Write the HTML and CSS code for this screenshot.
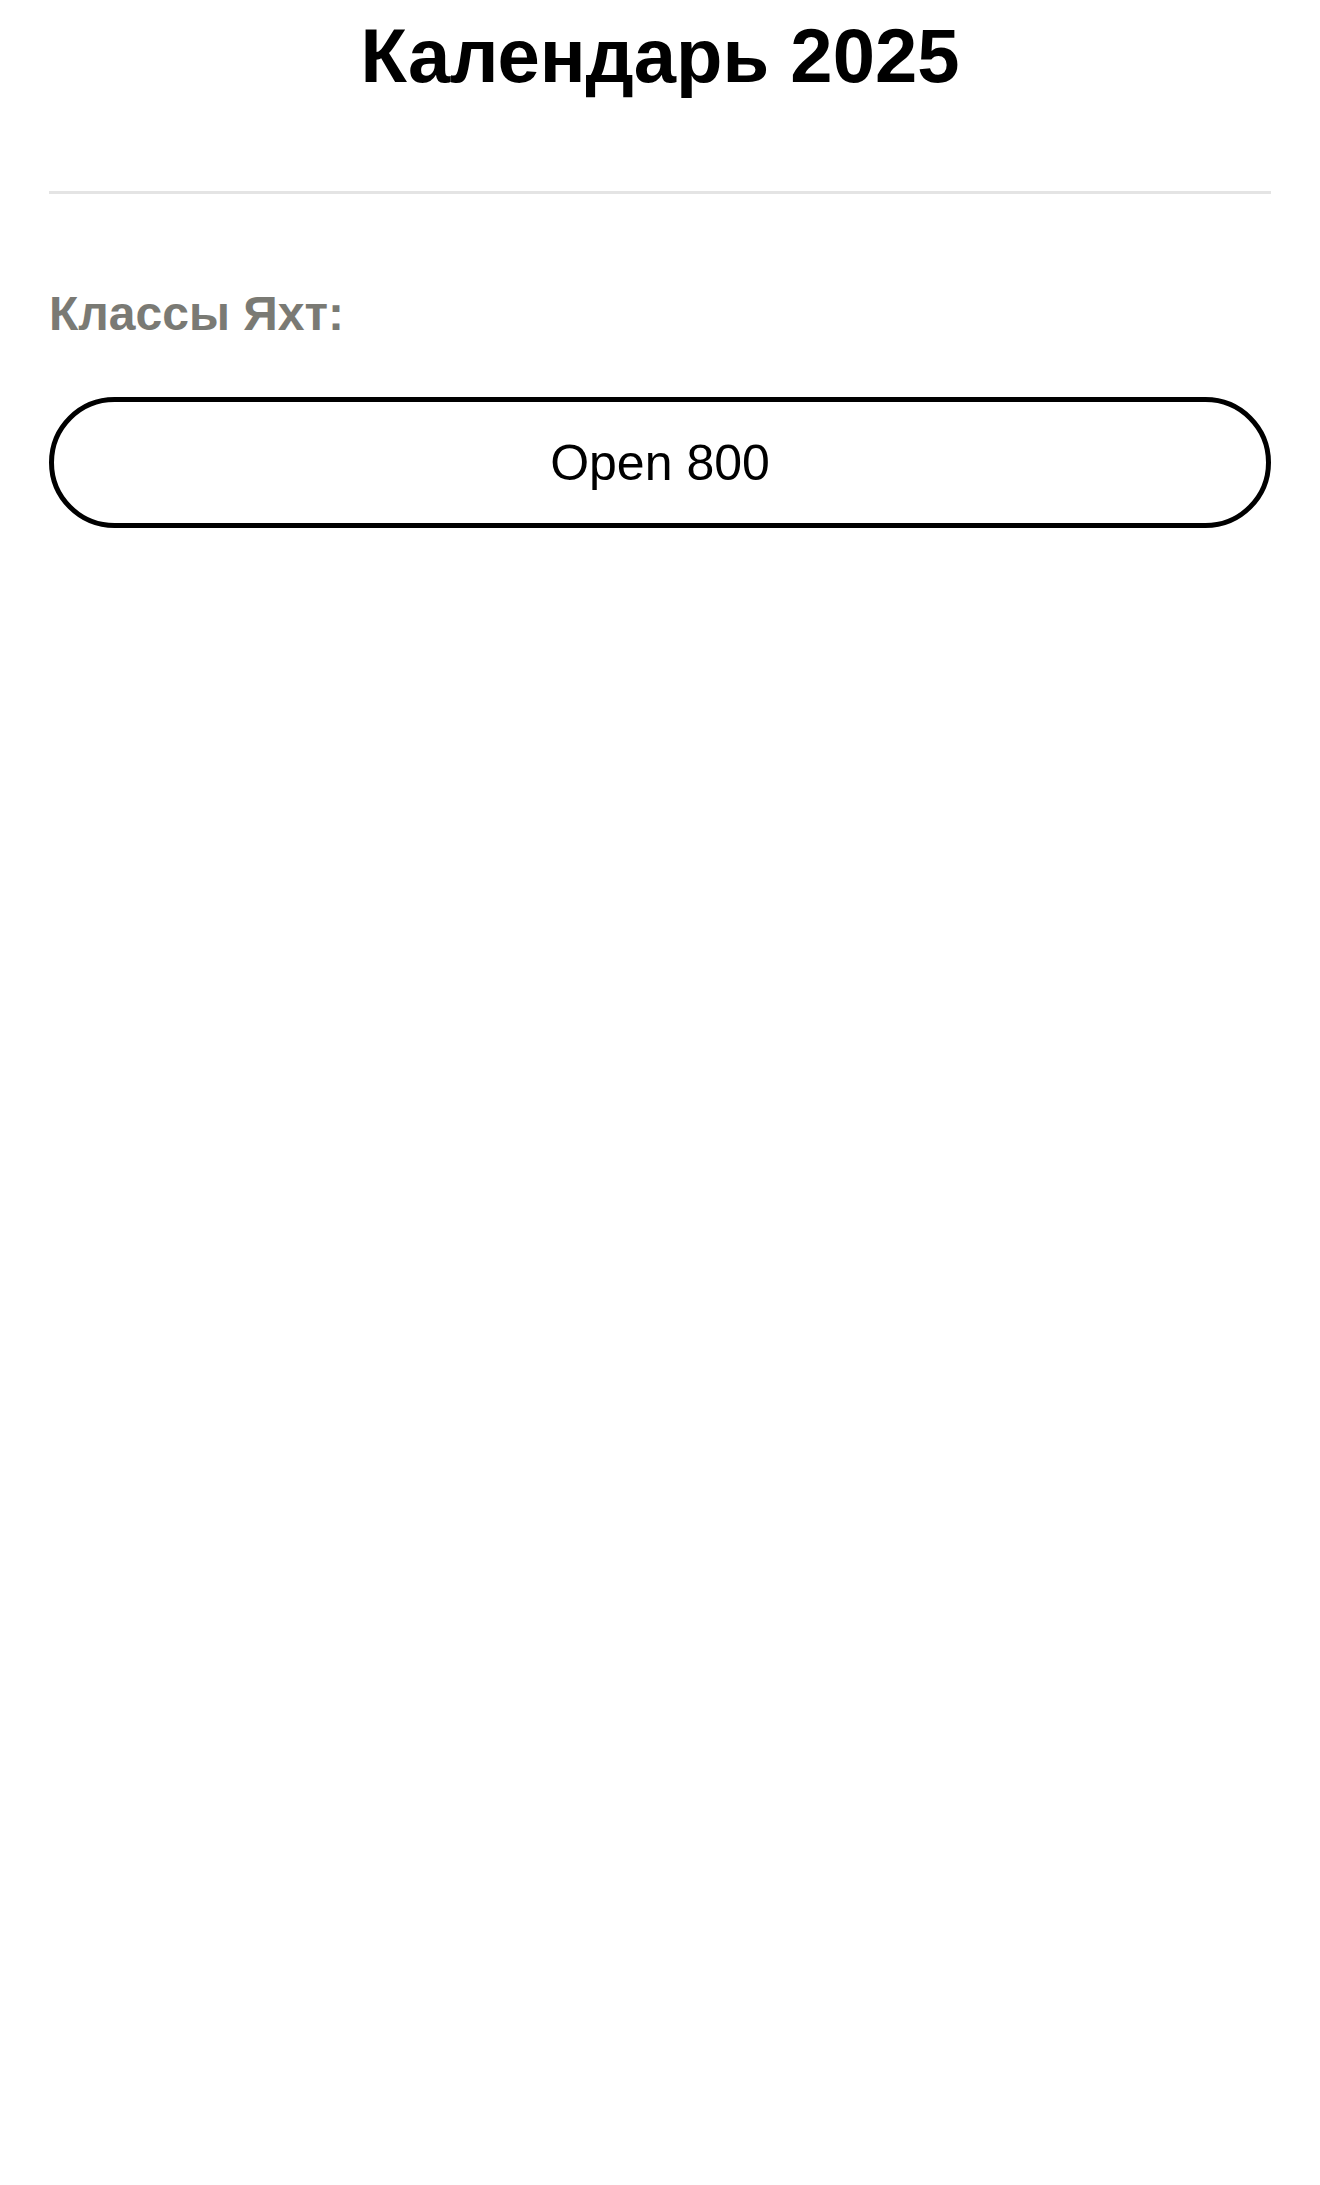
FILE: index.html
```html
<!DOCTYPE html>
<html lang="ru">
<head>
<meta charset="utf-8">
<title>Календарь 2025</title>
<link rel="stylesheet" href="styles.css">
</head>
<body>
<div class="page">
  <h1 class="title">Календарь 2025</h1>
  <hr class="divider">
  <h2 class="label">Классы Яхт:</h2>
  <div class="classes">
    <button class="pill" type="button">Open 800</button>
  </div>
</div>
</body>
</html>
```

FILE: styles.css
```css
html, body {
  margin: 0;
  padding: 0;
  background: #ffffff;
}
body {
  font-family: "Liberation Sans", Arial, sans-serif;
  color: #000;
}
.page {
  padding: 18px 49px 0;
  display: flex;
  flex-direction: column;
}
.title {
  margin: 0;
  font-size: 76px;
  line-height: 76px;
  font-weight: 700;
  text-align: center;
}
.divider {
  margin: 97px 0 0;
  border: 0;
  height: 3px;
  background: #e4e4e4;
}
.label {
  margin: 96px 0 0;
  font-size: 48px;
  line-height: 48px;
  font-weight: 700;
  color: #7a7a74;
}
.classes {
  margin-top: 59px;
  display: flex;
  flex-direction: column;
}
.pill {
  height: 131px;
  border: 5px solid #000;
  border-radius: 66px;
  background: #fff;
  font-family: "Liberation Sans", Arial, sans-serif;
  font-size: 50px;
  color: #000;
  padding: 0;
  display: flex;
  align-items: center;
  justify-content: center;
}
```
